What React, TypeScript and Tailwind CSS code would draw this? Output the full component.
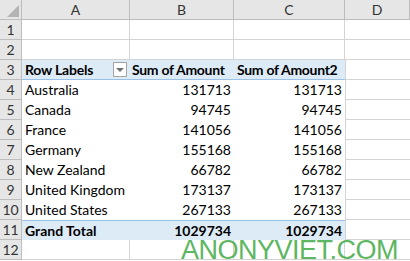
import React from 'react';

const cols = ['A', 'B', 'C', 'D'];

const rows: { label: string; b: string; c: string }[] = [
  { label: 'Australia', b: '131713', c: '131713' },
  { label: 'Canada', b: '94745', c: '94745' },
  { label: 'France', b: '141056', c: '141056' },
  { label: 'Germany', b: '155168', c: '155168' },
  { label: 'New Zealand', b: '66782', c: '66782' },
  { label: 'United Kingdom', b: '173137', c: '173137' },
  { label: 'United States', b: '267133', c: '267133' },
];

function RowHead({ n }: { n: number }) {
  return (
    <div className="h-5 flex items-center justify-center bg-[#e6e6e6] border-r border-b border-[#bdbdbd] text-[#333]">
      {n}
    </div>
  );
}

function Blank({ right = true }: { right?: boolean }) {
  return <div className={`h-5 border-b border-[#d4d4d4] ${right ? 'border-r' : ''}`} />;
}

export default function App() {
  return (
    <div className="relative w-[410px] h-[261px] overflow-hidden bg-white font-['Lato','Liberation_Sans',sans-serif] text-[14px] leading-none text-black whitespace-nowrap">
      <div className="grid grid-cols-[22px_108px_104px_111px_65px]">
        {/* column header row */}
        <div className="relative h-5 bg-[#e6e6e6] border-r border-b border-[#bdbdbd]">
          <div className="absolute right-[2px] bottom-[2px] w-0 h-0 border-l-[12px] border-l-transparent border-b-[12px] border-b-[#b4b4b4]" />
        </div>
        {cols.map((c) => (
          <div
            key={c}
            className="h-5 flex items-center justify-center bg-[#e6e6e6] border-r border-b border-[#bdbdbd] text-[#333]"
          >
            {c}
          </div>
        ))}

        {/* rows 1-2 */}
        {[1, 2].map((n) => (
          <React.Fragment key={n}>
            <RowHead n={n} />
            <Blank />
            <Blank />
            <Blank />
            <Blank right={false} />
          </React.Fragment>
        ))}

        {/* row 3: pivot header */}
        <RowHead n={3} />
        <div className="h-5 flex items-center justify-between pl-[3px] pr-[3px] bg-[#ddebf7] border-b border-[#9bc2e6] font-bold tracking-[-0.2px]">
          <span>Row Labels</span>
          <span className="w-[14px] h-[15px] bg-white border border-[#a6a6a6] flex items-center justify-center">
            <span className="w-0 h-0 border-l-[4px] border-r-[4px] border-t-[4px] border-l-transparent border-r-transparent border-t-[#707070]" />
          </span>
        </div>
        <div className="h-5 flex items-center pl-[2px] bg-[#ddebf7] border-b border-[#9bc2e6] font-bold tracking-[-0.3px]">
          Sum of Amount
        </div>
        <div className="h-5 flex items-center pl-[3px] bg-[#ddebf7] border-b border-[#9bc2e6] font-bold tracking-[-0.3px]">
          Sum of Amount2
        </div>
        <div className="h-5 border-l border-b border-[#d4d4d4]" />

        {/* rows 4-10 */}
        {rows.map((r, i) => (
          <React.Fragment key={r.label}>
            <RowHead n={i + 4} />
            <div className="h-5 flex items-center pl-[3px]">{r.label}</div>
            <div className="h-5 flex items-center justify-end pr-[3px]">{r.b}</div>
            <div className="h-5 flex items-center justify-end pr-[3px]">{r.c}</div>
            <div className="h-5 border-l border-b border-[#d4d4d4]" />
          </React.Fragment>
        ))}

        {/* row 11: grand total */}
        <RowHead n={11} />
        <div className="h-5 flex items-center pl-[3px] bg-[#ddebf7] border-t border-[#9bc2e6] font-bold">
          Grand Total
        </div>
        <div className="h-5 flex items-center justify-end pr-[3px] bg-[#ddebf7] border-t border-[#9bc2e6] font-bold">
          1029734
        </div>
        <div className="h-5 flex items-center justify-end pr-[3px] bg-[#ddebf7] border-t border-[#9bc2e6] font-bold">
          1029734
        </div>
        <div className="h-5 border-l border-b border-[#d4d4d4]" />

        {/* row 12 */}
        <RowHead n={12} />
        <Blank />
        <Blank />
        <Blank />
        <Blank right={false} />
      </div>

      {/* watermark */}
      <div className="absolute left-[181px] top-[237px] text-[27px] leading-none tracking-[-0.5px] text-[#4caf50] font-['Liberation_Sans',sans-serif] opacity-90">
        ANONYVIET.COM
      </div>
    </div>
  );
}
